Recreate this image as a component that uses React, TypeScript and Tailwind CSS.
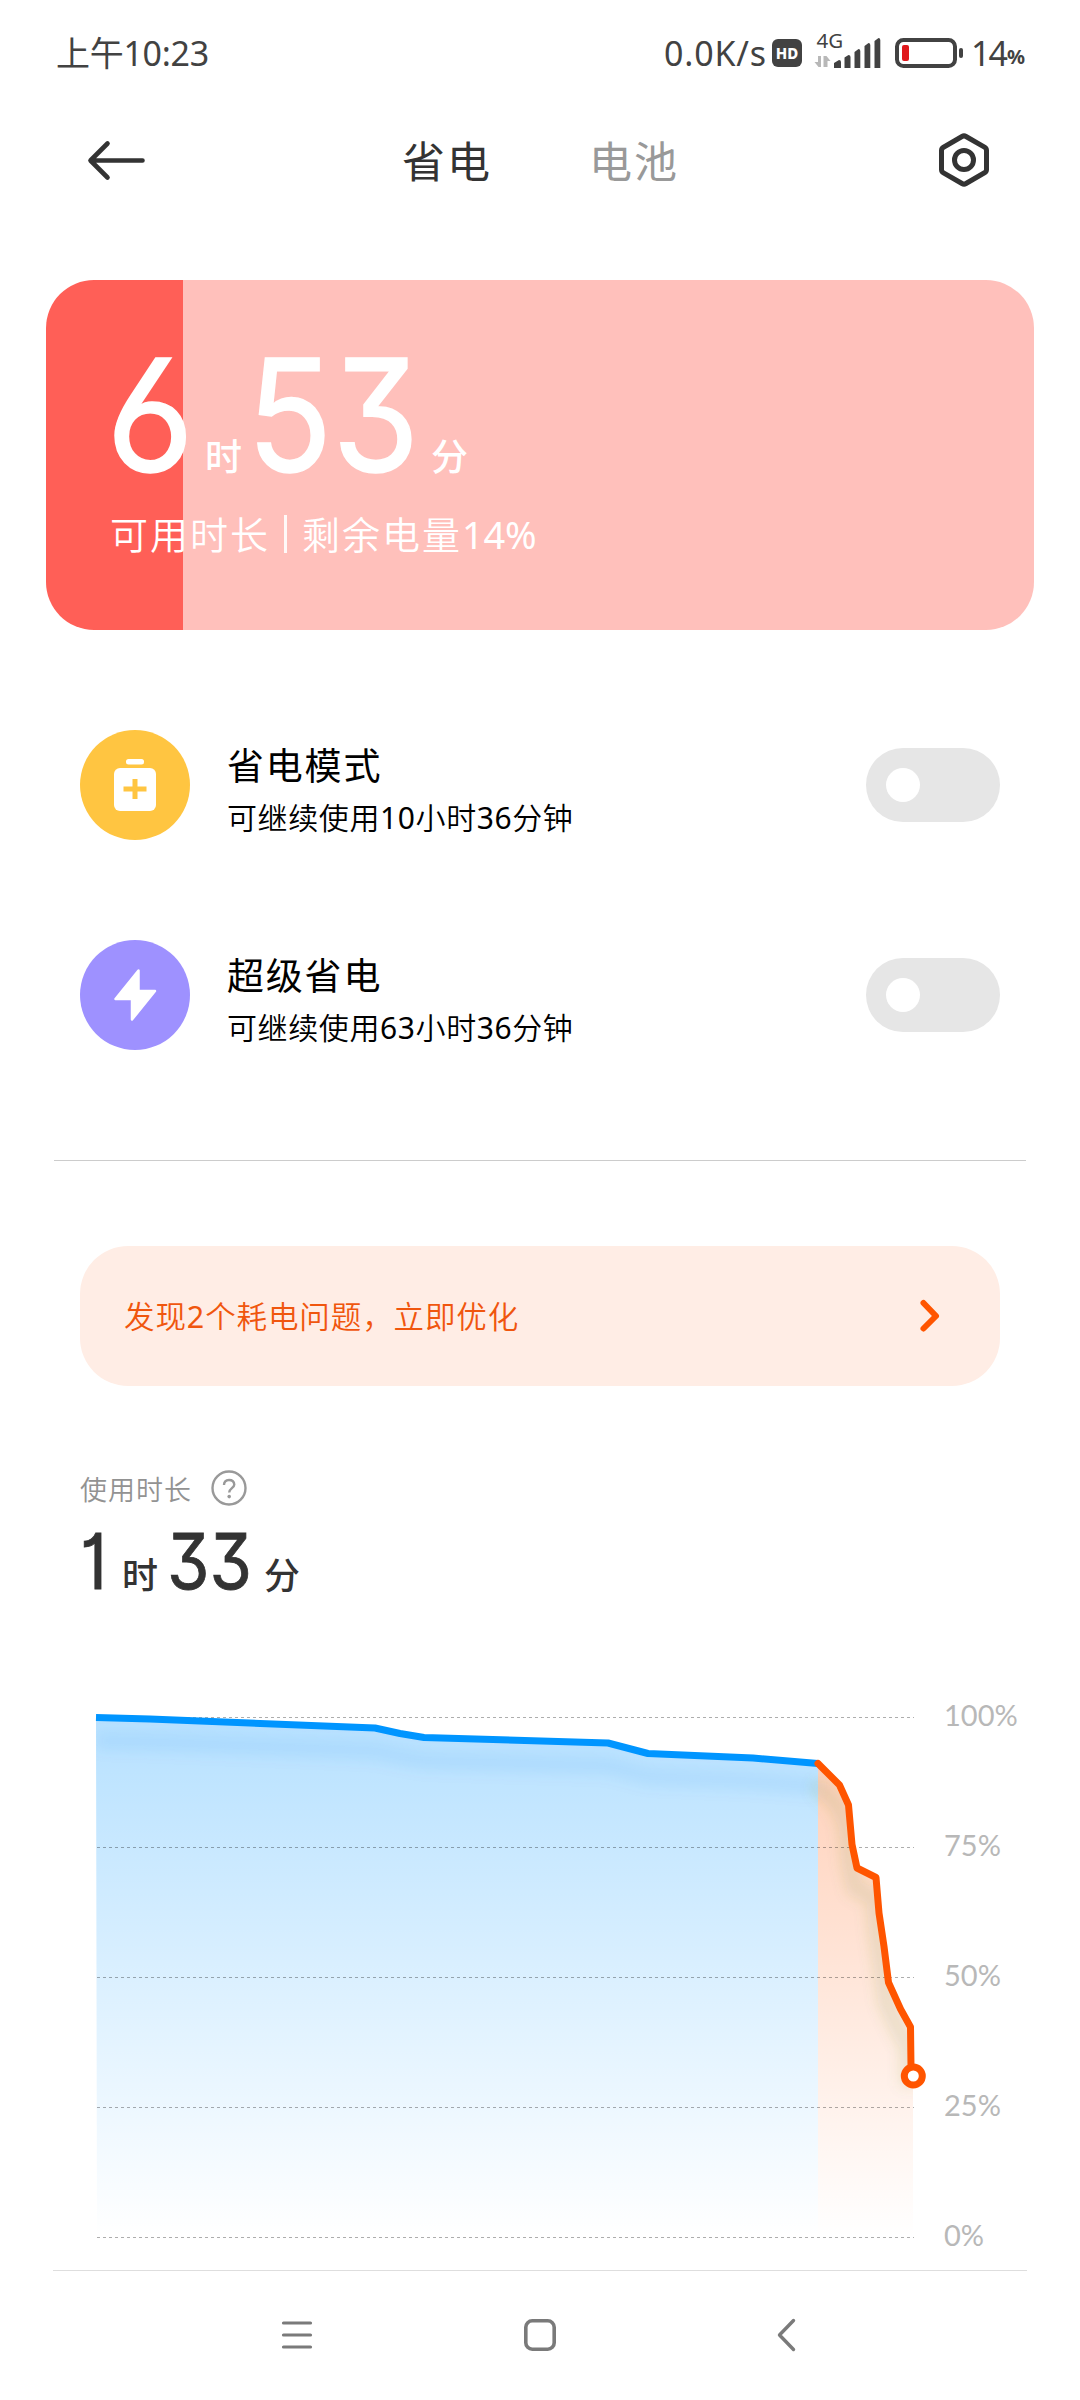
import React from "react";

const FONT = "font-['Noto_Sans','Noto_Sans_CJK_SC',sans-serif]";
const BIG = "font-['Inter','Noto_Sans_CJK_SC',sans-serif] [font-feature-settings:'cv03','cv09','cv01']";

/** Renders Chinese copy with its numbers at regular weight. */
function Mixed({ text }: { text: string }) {
  return (
    <>
      {text.split(/(\d+%?)/).map((part, i) =>
        /\d/.test(part) ? <span key={i} className="font-normal">{part}</span> : part
      )}
    </>
  );
}

function StatusBar() {
  return (
    <div className="flex h-[106px] items-center pl-[56px] pr-[54px] text-[#424242]">
      <span className="text-[34px] leading-[104px] tracking-[-0.3px]">上午10:23</span>
      <div className="ml-auto flex h-full items-center">
        <span className="w-[108px] text-[34px] leading-[103px] tracking-[0.8px]">0.0K/s</span>
        <span className="flex h-[28px] w-[30px] items-center justify-center rounded-[6px] bg-[#424242] text-[15px] leading-none font-extrabold text-white">HD</span>
        <svg className="ml-[12px]" width="68" height="106" viewBox="814 0 68 106">
          <text x="816.500" y="48" fontSize="20.500" fill="#424242" fontFamily="Noto Sans">4G</text>
          <g fill="#b8b8b8">
            <path d="M818 56h3v11h-2.500l-4-5h3.500zM823.500 56h2.500v11h-2.500zM826.500 56l4 5h-3v6h-2v-11z" />
          </g>
          <g fill="#424242">
            <path d="M834 63l5-3q2 0 2 2v6h-7zM844.500 57.500l4-2.500q2 0 2 2v11h-6zM854.500 52l4-3q1.800 0 1.800 2v17h-5.800zM864.500 46l4-3q1.800 0 1.800 2v23h-5.800zM874.500 41l4-3q1.800 0 1.800 2v28h-5.800z" />
          </g>
        </svg>
        <svg className="ml-[11px]" width="72" height="32" viewBox="893 36 72 32">
          <rect x="897" y="39" width="58" height="26" rx="6.500" fill="none" stroke="#424242" strokeWidth="4" />
          <rect x="902" y="44" width="7" height="16" rx="2" fill="#e0181c" />
          <rect x="959" y="47" width="4" height="10" rx="2" fill="#424242" />
        </svg>
        <span className="ml-[6px] text-[34px] leading-[103px] tracking-[-2px]">14</span>
        <span className="mr-px ml-px pt-[8px] text-[20px] leading-none font-bold">%</span>
      </div>
    </div>
  );
}

function Header() {
  return (
    <div className="flex h-[108px] items-center pl-[86px] pr-[89px]">
      <svg width="62" height="44" viewBox="86 138 62 44" fill="none" stroke="#333" strokeWidth="4.600" strokeLinecap="round" strokeLinejoin="round">
        <path d="M142.500 160.500H91M107.500 143.500L90.500 160.500L107.500 177.500" />
      </svg>
      <div className="ml-[254px] flex pt-[3px] text-[43px] leading-[105px] tracking-[2px]">
        <span className="w-[187px] text-[#333]">省电</span>
        <span className="w-[93px] text-[#999]">电池</span>
      </div>
      <svg className="ml-auto" width="54" height="58" viewBox="937 131 54 58" fill="none" stroke="#333" strokeWidth="5">
        <path d="M962 136.500Q964 135.300 966 136.500L984.500 147.200Q986.500 148.300 986.500 150.500V169.500Q986.500 171.700 984.500 172.800L966 183.500Q964 184.700 962 183.500L943.500 172.800Q941.500 171.700 941.500 169.500V150.500Q941.500 148.300 943.500 147.200Z" />
        <circle cx="964" cy="160" r="9.500" />
      </svg>
    </div>
  );
}

function BatteryCard() {
  return (
    <div className="mx-[46px] mt-[66px] flex h-[350px] flex-col rounded-[48px] bg-[linear-gradient(90deg,#ff5f57_137.500px,#ffc0bb_137.500px)] pl-[60px] text-white">
      <div className={`mt-[57px] flex h-[156px] items-end ${BIG}`}>
        <span className="w-[99px] origin-left scale-x-[0.980] text-[155px] leading-[156px] [-webkit-text-stroke:1.5px_white]">6</span>
        <span className="w-[42px] pb-[10px] text-[37px] leading-[50px] font-medium">时</span>
        <span className="w-[184px] origin-left scale-x-[0.905] text-[155px] leading-[156px] [-webkit-text-stroke:1.5px_white]">53</span>
        <span className="pb-[10px] text-[37px] leading-[50px] font-medium">分</span>
      </div>
      <div className="mt-[11px] ml-[4px] flex items-center text-[38px] leading-[60px] font-[350] tracking-[2px]">
        <span>可用时长</span>
        <span className="mr-[15px] ml-[14px] h-[38px] w-[3px] bg-white/90" />
        <span>剩余电量<span className="tracking-[-0.3px]"><Mixed text="14%" /></span></span>
      </div>
    </div>
  );
}

function Toggle() {
  return (
    <div className="ml-auto flex h-[74px] w-[134px] items-center rounded-full bg-[#e6e6e6] pl-[20px]">
      <div className="size-[34px] rounded-full bg-white" />
    </div>
  );
}

function ModeRow({ icon, title, desc }: { icon: React.ReactNode; title: string; desc: string }) {
  return (
    <div className="flex h-[110px] items-center">
      {icon}
      <div className="ml-[37px] flex flex-col pt-[9px] text-black">
        <span className="text-[37px] leading-[56px] tracking-[1.800px]">{title}</span>
        <span className="text-[30px] leading-[48px] font-[350] tracking-[0.600px]"><Mixed text={desc} /></span>
      </div>
      <Toggle />
    </div>
  );
}

const SaveIcon = (
  <svg className="size-[110px]" viewBox="80 730 110 110">
    <circle cx="135" cy="785" r="55" fill="#ffc541" />
    <rect x="126" y="759" width="18" height="5.500" rx="2.500" fill="#fff" />
    <rect x="114" y="768" width="42" height="43" rx="6" fill="#fff" />
    <path d="M123.500 789H146.500M135 779V799" stroke="#ffc541" strokeWidth="5" />
  </svg>
);

const BoltIcon = (
  <svg className="size-[110px]" viewBox="80 940 110 110">
    <circle cx="135" cy="995" r="55" fill="#9e91ff" />
    <path d="M138.500 970.500V991H155L132 1019.500V999H115.500Z" fill="#fff" stroke="#fff" strokeWidth="2.500" strokeLinejoin="round" />
  </svg>
);

const BLUE = "96,1717.500 150,1719 375,1728 400,1733.500 424,1737.500 608,1743 648,1753.500 753,1758 818,1763.500";
const ORANGE = "818,1763.500 839.500,1785 848.500,1805 852,1844.500 857,1868 876,1877.500 879,1913 884,1946.500 888.500,1982.500 900.500,2009 910.500,2027 911,2066";
const LEVELS = [1717.5, 1847.5, 1977.5, 2107.5, 2237.5];

function Chart() {
  return (
    <div className="flex h-[586px]">
      <svg width="932" height="586" viewBox="0 1684 932 586" fill="none">
        <defs>
          <linearGradient id="b" gradientUnits="userSpaceOnUse" x1="0" y1="1717" x2="0" y2="2237">
            <stop offset="0" stopColor="#0095ff" stopOpacity="0.285" />
            <stop offset="1" stopColor="#0095ff" stopOpacity="0" />
          </linearGradient>
          <linearGradient id="o" gradientUnits="userSpaceOnUse" x1="0" y1="1763" x2="0" y2="2237">
            <stop offset="0" stopColor="#ff5500" stopOpacity="0.270" />
            <stop offset="1" stopColor="#ff5500" stopOpacity="0" />
          </linearGradient>
          <filter id="s" filterUnits="userSpaceOnUse" x="60" y="1690" width="900" height="500">
            <feGaussianBlur stdDeviation="7" />
          </filter>
          <clipPath id="c">
            <polygon points={`${BLUE} ${ORANGE} 913,2076 913,2237 97,2237`} />
          </clipPath>
        </defs>
        <polygon points={`${BLUE} 818,2237 97,2237`} fill="url(#b)" />
        <polygon points={`${ORANGE} 913,2076 913,2237 818,2237`} fill="url(#o)" />
        <g clipPath="url(#c)">
          <polyline points={BLUE} transform="translate(0 23)" stroke="#0080e8" strokeOpacity="0.080" strokeWidth="18" filter="url(#s)" />
          <polyline points={ORANGE} transform="translate(-2 20)" stroke="#6a8a30" strokeOpacity="0.150" strokeWidth="16" filter="url(#s)" />
        </g>
        {LEVELS.map((y) => (
          <path key={y} d={`M97 ${y}H914`} stroke="#000" strokeOpacity="0.320" strokeWidth="1" strokeDasharray="3 3" />
        ))}
        <polyline points={BLUE} stroke="#0095ff" strokeWidth="7" strokeLinejoin="round" />
        <polyline points={ORANGE} stroke="#ff5500" strokeWidth="7" strokeLinejoin="round" strokeLinecap="round" />
        <circle cx="913.300" cy="2076" r="9" fill="#fff" stroke="#ff5500" strokeWidth="7" />
      </svg>
      <div className="ml-[12px] flex flex-col font-['Lato',sans-serif] text-[29px] leading-[130px] text-[#b8b8b8] -mt-[34px]">
        {["100%", "75%", "50%", "25%", "0%"].map((t) => (
          <span key={t} className="h-[130px]">{t}</span>
        ))}
      </div>
    </div>
  );
}

function NavBar() {
  return (
    <div className="flex flex-1 items-start pl-[280px] pt-[46px]">
      <svg width="34" height="36" viewBox="280 2317 34 36" stroke="#7a7a7a" strokeWidth="3.200" strokeLinecap="round">
        <path d="M283.500 2323H310.500M283.500 2335H310.500M283.500 2347H310.500" />
      </svg>
      <svg className="ml-[208px]" width="36" height="36" viewBox="522 2317 36 36" fill="none" stroke="#7a7a7a" strokeWidth="3.600">
        <rect x="525.800" y="2320.800" width="28.400" height="28.400" rx="6.500" />
      </svg>
      <svg className="ml-[218px]" width="22" height="36" viewBox="777 2317 22 36" fill="none" stroke="#7a7a7a" strokeWidth="3.400" strokeLinecap="round" strokeLinejoin="round">
        <path d="M794.500 2320.500L780.500 2335L794.500 2349.500" />
      </svg>
    </div>
  );
}

export default function App() {
  return (
    <div className={`flex h-[2400px] w-[1080px] flex-col overflow-hidden bg-white ${FONT}`}>
      <StatusBar />
      <Header />
      <BatteryCard />
      <div className="mx-[80px] mt-[100px] flex flex-col gap-[100px]">
        <ModeRow icon={SaveIcon} title="省电模式" desc="可继续使用10小时36分钟" />
        <ModeRow icon={BoltIcon} title="超级省电" desc="可继续使用63小时36分钟" />
      </div>
      <div className="mx-[54px] mt-[110px] h-px shrink-0 bg-[#cccccc]" />
      <div className="mx-[80px] mt-[85px] flex h-[140px] shrink-0 items-center rounded-[48px] bg-[#ffede5] pl-[44px] pr-[58px]">
        <span className="text-[30.500px] leading-[60px] font-[350] tracking-[0.900px] text-[#f0560e]"><Mixed text="发现2个耗电问题，立即优化" /></span>
        <svg className="ml-auto" width="24" height="36" viewBox="918 1298 24 36" fill="none" stroke="#ff5500" strokeWidth="6" strokeLinecap="round" strokeLinejoin="round">
          <path d="M923.500 1303L936 1316L923.500 1328.500" />
        </svg>
      </div>
      <div className="ml-[80px] mt-[82px] flex h-[40px] shrink-0 items-center">
        <span className="pt-[3px] text-[27px] leading-[40px] font-[350] tracking-[1px] text-[#929292]">使用时长</span>
        <svg className="ml-[18px]" width="38" height="38" viewBox="0 0 38 38" fill="none" stroke="#999" strokeWidth="2.400">
          <circle cx="19" cy="19" r="16.500" />
          <path d="M14 16Q14 11 19 11T24.300 15.600C24.300 19 19.200 19.500 19.200 23.500" />
          <circle cx="19.200" cy="27.600" r="1.800" fill="#999" stroke="none" />
        </svg>
      </div>
      <div className={`ml-[80px] flex h-[76px] shrink-0 items-end mt-[15px] text-[#333] ${BIG}`}>
        <span className="w-[42px] origin-left scale-x-[0.880] text-[77px] leading-[76px] [-webkit-text-stroke:0.8px_#333]">1</span>
        <span className="w-[45px] text-[36px] leading-[46px] font-medium">时</span>
        <span className="w-[97px] origin-left scale-x-[0.890] text-[77px] leading-[76px] [-webkit-text-stroke:0.8px_#333]">33</span>
        <span className="text-[36px] leading-[46px] font-medium">分</span>
      </div>
      <div className="h-[85px] shrink-0" />
      <Chart />
      <div className="mx-[53px] h-px shrink-0 bg-[#dedede]" />
      <NavBar />
    </div>
  );
}
